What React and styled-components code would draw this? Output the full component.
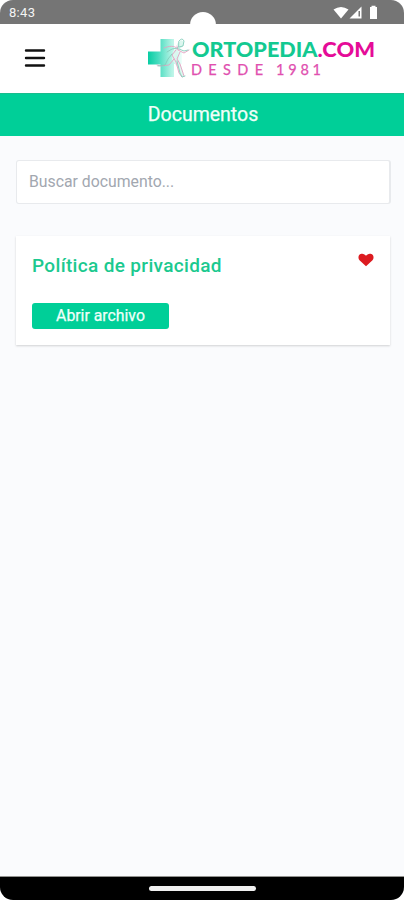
import React from "react";
import styled, { createGlobalStyle } from "styled-components";

const GlobalStyle = createGlobalStyle`
  * { box-sizing: border-box; }
  body { margin: 0; background: #fff; font-family: Roboto, sans-serif; }
`;

const Screen = styled.div`
  display: flex;
  flex-direction: column;
  width: 404px;
  height: 900px;
  overflow: hidden;
  background: #fafbfd;
  border-radius: 13px;
`;

const StatusBar = styled.div`
  position: relative;
  display: flex;
  flex: none;
  align-items: center;
  justify-content: space-between;
  height: 24px;
  padding: 2px 25px 0 9px;
  background: #757575;
  color: #f4f4f4;
`;

const Clock = styled.span`
  font-size: 13px;
  line-height: 16px;
  letter-spacing: 0.3px;
`;

const CameraHole = styled.div`
  position: absolute;
  left: 190px;
  top: 12px;
  width: 26px;
  height: 26px;
  border-radius: 50%;
  background: #fff;
`;

const StatusIcons = styled.svg`
  display: block;
  width: 46px;
  height: 16px;
`;

const Header = styled.header`
  display: flex;
  flex: none;
  align-items: center;
  justify-content: space-between;
  height: 69px;
  padding: 0 24px 0 24px;
  background: #fff;
`;

const MenuButton = styled.button`
  display: flex;
  padding: 0 0 2px;
  border: 0;
  background: none;
`;

const LogoMark = styled.svg`
  display: block;
  width: 236px;
  height: 50px;
`;

const TitleBar = styled.h1`
  flex: none;
  height: 43px;
  margin: 0;
  border-top: 1px solid #19bc8d;
  background: #00cf98;
  color: #f0fff9;
  font-size: 19.5px;
  font-weight: 400;
  -webkit-text-stroke: 0.25px;
  line-height: 42px;
  text-align: center;
  text-indent: 2px;
`;

const Content = styled.main`
  flex: 1;
  padding: 24px 13px 0 16px;
`;

const SearchInput = styled.input`
  display: block;
  width: 100%;
  height: 44px;
  padding: 0 12px 1px;
  border: 1px solid #e8eaed;
  border-width: 1px 2px 1px 1px;
  border-radius: 3px;
  outline: 0;
  background: #fff;
  font: 400 15.8px Roboto, sans-serif;
  &::placeholder { color: #a2a7b0; opacity: 1; }
`;

const Card = styled.article`
  display: flex;
  align-items: flex-start;
  justify-content: space-between;
  height: 109px;
  margin-top: 32px;
  margin-right: 1px;
  padding: 16px;
  background: #fff;
  box-shadow: 0 1px 2px rgba(0, 0, 0, 0.17);
`;

const CardTitle = styled.h2`
  margin: 0 0 24px;
  color: #1bc98f;
  font-size: 19px;
  font-weight: 500;
  line-height: 27px;
  letter-spacing: 0.34px;
`;

const OpenButton = styled.button`
  display: block;
  width: 137px;
  height: 26px;
  padding: 0;
  border: 0;
  border-radius: 3px;
  background: #00cf98;
  color: #effff9;
  font: 400 15.8px/26px Roboto, sans-serif;
  -webkit-text-stroke: 0.25px;
`;

const Heart = styled.svg`
  width: 16px;
  height: 14px;
  margin-top: 1px;
`;

const NavigationBar = styled.footer`
  display: flex;
  flex: none;
  align-items: center;
  justify-content: center;
  height: 24px;
  border-top: 1px solid #92928f;
  background: #000;
`;

const HomeIndicator = styled.div`
  width: 107px;
  height: 5px;
  margin-left: 1px;
  border-radius: 3px;
  background: #f0f0f0;
`;

function Logo() {
  return (
    <LogoMark viewBox="144 34 236 50" role="img" aria-label="Ortopedia.com">
      <defs>
        <linearGradient id="cross" x1="0" x2="1">
          <stop offset="0" stopColor="#08cda3" />
          <stop offset=".3" stopColor="#48dcbf" />
          <stop offset=".7" stopColor="#b5f3e5" />
          <stop offset="1" stopColor="#effffb" />
        </linearGradient>
      </defs>
      <path d="M160.5 39H174v12.500h8V64h-8v13h-13.500V64.500H148V51.500h12.500z" fill="url(#cross)" />
      <path d="M177 44l4-4 3 2-1 4-4 4-3 6 4 7 4 12-2 2-4-9-6-8 1-9 5-4z" fill="#dcf7ef" />
      <g fill="none" strokeLinecap="round" strokeLinejoin="round" strokeWidth=".9">
        <path d="M164 48c5-2 10-3 14 1m-1-3l1 4 6 3 5-3M176 50l-4 5 4 7 3 11 3 4M174 59l-5 6-9 1-3-1M180 52l-3 7 3 5 4 12" stroke="#e3a2c2" />
        <path d="M179 41q3-4 5 0l-1 5-4 1zm-1 7l-6 1-5 3M179 49l5 2 4-1M172 54l-4 5-3 6-7 1M177 61l3 12 2 4 3-1" stroke="#83cdbb" />
      </g>
      <g fontFamily="Lato, sans-serif">
        <text x="192" y="57.300" fontSize="20.800" fontWeight="900" fill="#13c991" textLength="125.500" lengthAdjust="spacingAndGlyphs">ORTOPEDIA</text>
        <text x="317.500" y="57.300" fontSize="20.800" fontWeight="900" fill="#e50b98" textLength="57.500" lengthAdjust="spacingAndGlyphs">.COM</text>
        <g fontSize="14.500" fill="#e04faf" stroke="#e04faf" strokeWidth=".25">
          <text x="191" y="75.400" textLength="72">DESDE</text>
          <text x="276" y="75.400" textLength="45">1981</text>
        </g>
      </g>
    </LogoMark>
  );
}

export default function App() {
  return (
    <>
      <GlobalStyle />
      <Screen>
        <StatusBar>
          <Clock>8:43</Clock>
          <CameraHole />
          <StatusIcons viewBox="0 0 46 16" fill="#fff" aria-hidden="true">
            <path d="M.5 4.500Q8 -.5 15.500 4.500L8 13.500z" />
            <path d="M28.500 1.500v12H16.500z" />
            <path d="M25.500 6h1.500v5.500h-1.500z" fill="#777" />
            <path d="M37 2h1.500V.8h4V2h1.500v12h-7V2z" />
          </StatusIcons>
        </StatusBar>
        <Header>
          <MenuButton aria-label="Menú">
            <svg width="22" height="20" viewBox="0 0 22 20">
              <path d="M2 2.500h18M2 10h18M2 17.500h18" stroke="#111" strokeWidth="2.400" strokeLinecap="round" />
            </svg>
          </MenuButton>
          <Logo />
        </Header>
        <TitleBar>Documentos</TitleBar>
        <Content>
          <SearchInput placeholder="Buscar documento..." />
          <Card>
            <div>
              <CardTitle>Política de privacidad</CardTitle>
              <OpenButton>Abrir archivo</OpenButton>
            </div>
            <Heart viewBox="0 0 16 14" role="img" aria-label="Favorito">
              <path d="M8 13.300L1.500 7.200C-.5 5 .5 1 3.500.8 5.500.5 7 1.700 8 2.700 9 1.700 10.500.5 12.500.8c3 .2 4 4.200 2 6.400z" fill="#dc1b20" />
            </Heart>
          </Card>
        </Content>
        <NavigationBar><HomeIndicator /></NavigationBar>
      </Screen>
    </>
  );
}
